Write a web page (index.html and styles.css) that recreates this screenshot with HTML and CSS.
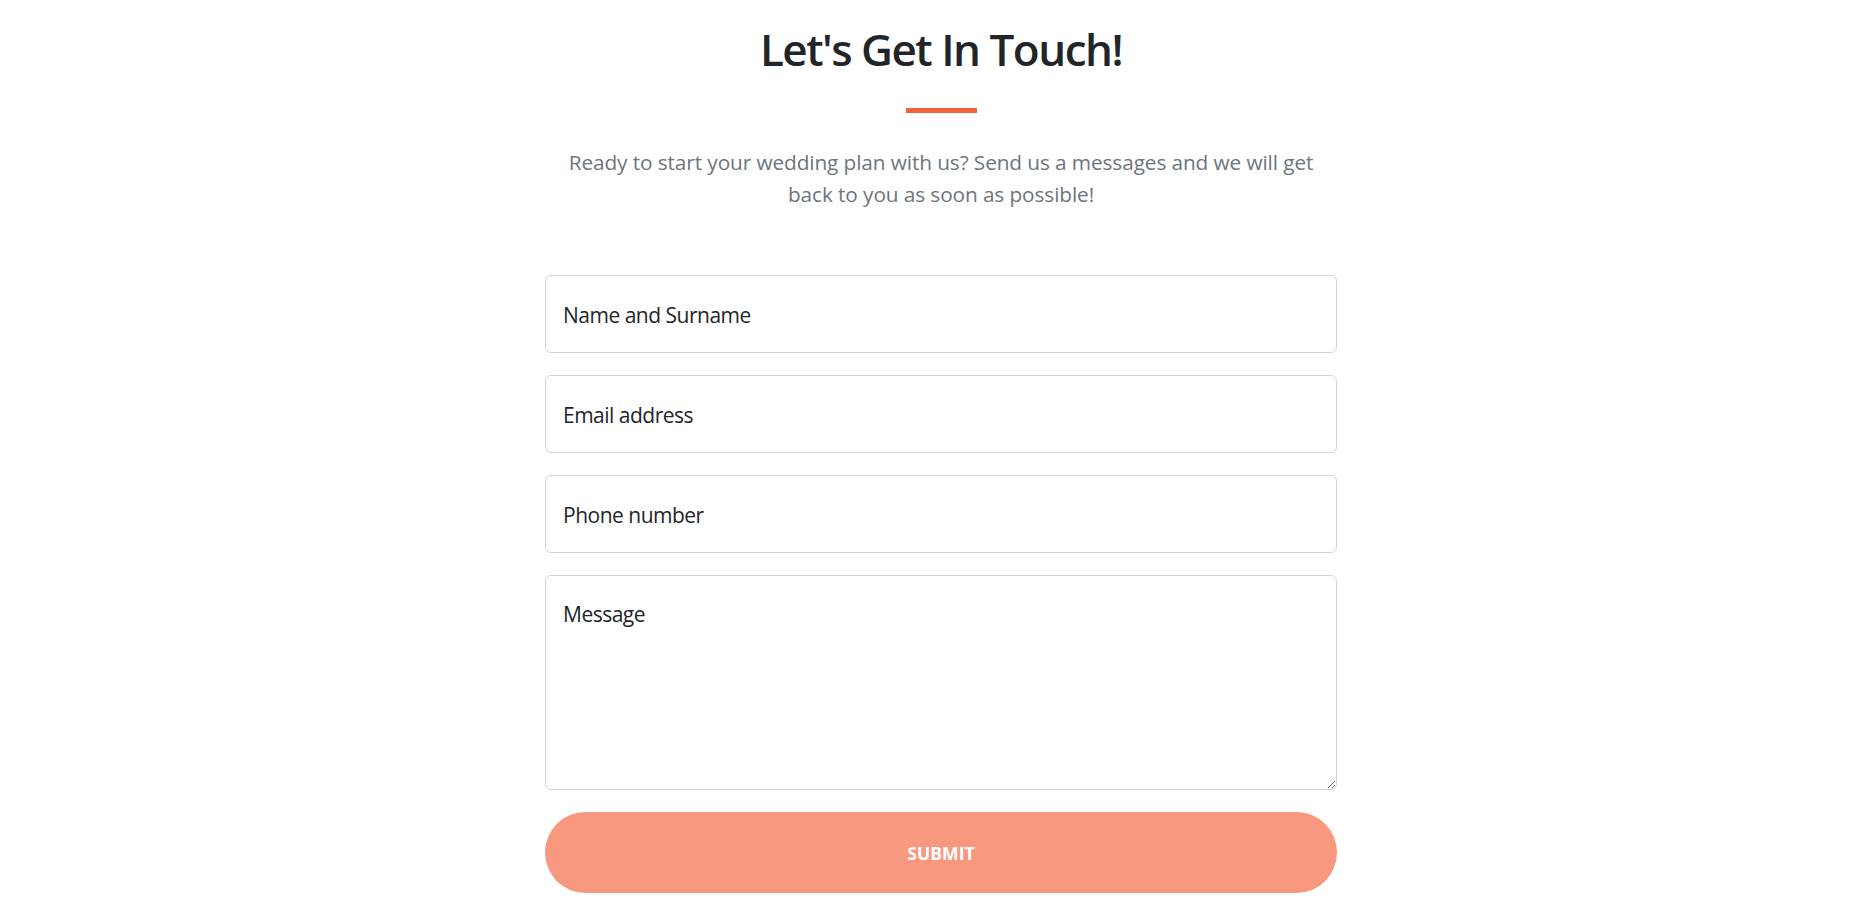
FILE: index.html
```html
<!DOCTYPE html>
<html lang="en">
<head>
<meta charset="utf-8">
<title>Let's Get In Touch!</title>
<link rel="stylesheet" href="styles.css">
</head>
<body>
<section class="contact">
  <h1 class="contact-title">Let's Get In Touch!</h1>
  <hr class="divider">
  <p class="lead">Ready to start your wedding plan with us? Send us a messages and we will get back to you as soon as possible!</p>
  <form class="contact-form">
    <input class="field" type="text" placeholder="Name and Surname">
    <input class="field" type="email" placeholder="Email address">
    <input class="field" type="tel" placeholder="Phone number">
    <textarea class="field field-area" placeholder="Message"></textarea>
    <button class="submit" type="button" disabled>Submit</button>
  </form>
</section>
</body>
</html>
```
FILE: styles.css
```css
html, body {
  margin: 0;
  padding: 0;
  background: #ffffff;
}
body {
  padding-left: 12px;
  font-family: "Open Sans", "Noto Sans", "Liberation Sans", sans-serif;
  color: #212529;
}
.contact {
  display: flex;
  flex-direction: column;
  align-items: center;
}
.contact-title {
  margin: 23px 0 0;
  font-size: 44px;
  line-height: 53px;
  font-weight: 600;
  color: #212529;
  letter-spacing: -1.5px;
}
.divider {
  margin: 32px 0 0;
  width: 71px;
  height: 5px;
  border: 0;
  background: #f4623a;
}
.lead {
  margin: 33px 0 0;
  max-width: 775px;
  font-size: 20.8px;
  line-height: 32px;
  text-align: center;
  color: #6c757d;
  letter-spacing: -0.1px;
}
.contact-form {
  margin-top: 65px;
  width: 792px;
  display: flex;
  flex-direction: column;
  gap: 22px;
}
.field {
  box-sizing: border-box;
  display: block;
  width: 100%;
  height: 78px;
  margin: 0;
  padding: 2px 17px 0;
  border: 1px solid #ced4da;
  border-radius: 6px;
  background: #ffffff;
  font-family: inherit;
  font-size: 21px;
  line-height: 33px;
  letter-spacing: -0.5px;
  color: #212529;
  outline: none;
}
.field::placeholder {
  color: #212529;
  opacity: 1;
}
.field-area {
  height: 215px;
  padding: 22px 17px 20px;
  resize: vertical;
}
.submit {
  height: 81px;
  width: 100%;
  margin: 0;
  border: 0;
  border-radius: 41px;
  background: #f8997f;
  color: #ffffff;
  font-family: inherit;
  font-size: 17.6px;
  font-weight: 700;
  text-transform: uppercase;
  cursor: default;
}
```
